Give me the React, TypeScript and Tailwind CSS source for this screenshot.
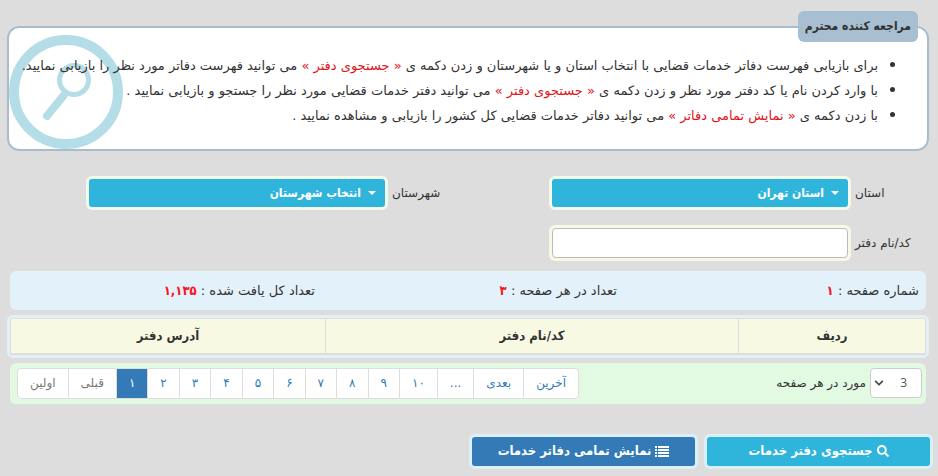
import React from 'react';
import { useState } from "react"
import { FaSearch, FaChevronDown } from "react-icons/fa"

const columns = [
    { title: "ردیف", width: "w-[187px]" },
    { title: "کد/نام دفتر", width: "" },
    { title: "آدرس دفتر", width: "w-[315px]" },
]

const pages = ["۱", "۲", "۳", "۴", "۵", "۶", "۷", "۸", "۹", "۱۰"]

const bold = `font-["DejaVu_Sans_Condensed","DejaVu_Sans",sans-serif] font-bold`

const ListIcon = () => (
    <svg viewBox="0 0 14 11" className="w-[14px] h-[11px] fill-current">
        <path d="M0 0h2v2H0zM3 0h11v2H3zM0 3h2v2H0zM3 3h11v2H3zM0 6h2v2H0zM3 6h11v2H3zM0 9h2v2H0zM3 9h11v2H3z" />
    </svg>
)

const Mark = ({ children }: { children: React.ReactNode }) => (
    <span className="text-[#e0141c]">« {children} »</span>
)

const SelectField = ({ id, label, options }: { id: string, label: string, options: string[] }) => (
    <div className="flex items-center">
        <label htmlFor={id} className="w-20 shrink-0 pl-1 text-left text-xs">{label}</label>
        <div className="relative w-[302px]">
            <select
                id={id}
                className={`block w-full h-[34px] appearance-none rounded-md border-3 border-[#f2fbe9] bg-[#2fb5dc] pr-6 pl-3 text-xs text-white ${bold}`}
            >
                {options.map(option => <option key={option}>{option}</option>)}
            </select>
            <svg viewBox="0 0 8 4" className="pointer-events-none absolute right-3 top-[15px] w-2 h-1 fill-white">
                <path d="M0 0h8L4 4z" />
            </svg>
        </div>
    </div>
)

const Stat = ({ label, value }: { label: string, value: string }) => (
    <p className="px-[7px]">{label} : <b className={`text-[#f81420] ${bold}`}>{value}</b></p>
)

const App = () => {
    const [currentPage, setCurrentPage] = useState("۱")
    const pageItem = "h-full border-r border-[#ddd] px-3"

    return (
        <div dir="rtl" className={`min-h-screen bg-[#dddddd] px-[5px] pt-[11px] text-[#333] font-["DejaVu_Sans",sans-serif]`}>
            {/* Help box */}
            <fieldset className="relative mr-1 ml-0.5 h-[140px] rounded-xl border-2 border-[#a9bccb] bg-white px-[9px]">
                <legend className={`relative z-10 h-[31px] rounded-md bg-[#a7bfd0] px-[7px] text-xs leading-[31px] ${bold}`}>
                    مراجعه کننده محترم
                </legend>
                <svg viewBox="0 0 114 114" className="absolute left-0 bottom-0 size-[114px] fill-none stroke-[#b5dde8]">
                    <circle cx="57" cy="57" r="52" strokeWidth="10" />
                    <circle cx="65" cy="45" r="14.5" strokeWidth="5" />
                    <path d="M55 60L38 81" strokeWidth="8" strokeLinecap="round" />
                    <path d="M58 56l-3 4" strokeWidth="5" />
                </svg>
                <ul className="relative mt-[11px] list-disc pr-10 text-[13px] leading-[25px] whitespace-nowrap marker:text-base">
                    <li>برای بازیابی فهرست دفاتر خدمات قضایی با انتخاب استان و یا شهرستان و زدن دکمه ی <Mark>جستجوی دفتر</Mark> می توانید فهرست دفاتر مورد نظر را بازیابی نمایید.</li>
                    <li>با وارد کردن نام یا کد دفتر مورد نظر و زدن دکمه ی <Mark>جستجوی دفتر</Mark> می توانید دفتر خدمات قضایی مورد نظر را جستجو و بازیابی نمایید .</li>
                    <li>با زدن دکمه ی <Mark>نمایش تمامی دفاتر</Mark> می توانید دفاتر خدمات قضایی کل کشور را بازیابی و مشاهده نمایید .</li>
                </ul>
            </fieldset>

            {/* Filters */}
            <form className="mt-[25px] grid grid-cols-2 gap-y-[15px] pr-0.5">
                <SelectField id="province" label="استان" options={["استان تهران"]} />
                <SelectField id="city" label="شهرستان" options={["انتخاب شهرستان"]} />
                <div className="flex items-center">
                    <label htmlFor="office" className="w-20 shrink-0 pl-1 text-left text-xs whitespace-nowrap">کد/نام دفتر</label>
                    <div className="w-[302px] rounded-md bg-[#f7f9e6] p-[3px]">
                        <input id="office" type="text" className="block w-full h-[30px] rounded border border-[#bbb] bg-white px-2 text-xs" />
                    </div>
                </div>
            </form>

            {/* Summary */}
            <div className="mt-2.5 mr-[7px] ml-[5px] grid h-[39px] grid-cols-3 items-center rounded-md bg-[#e3f2fa] pl-2.5 text-[13px]">
                <Stat label="شماره صفحه" value="۱" />
                <Stat label="تعداد در هر صفحه" value="۳" />
                <Stat label="تعداد کل یافت شده" value="۱,۱۳۵" />
            </div>

            <div className="mt-[5px] mr-1 ml-0.5 rounded-md bg-[#e3f0f8] p-[3px]">
                <table className="w-full table-fixed border-collapse bg-[#f8f9e3] text-[13px]">
                    <thead>
                        <tr>
                            {columns.map(col => (
                                <th key={col.title} className={`${col.width} ${bold} h-[35px] border border-b-2 border-[#ddd]`}>{col.title}</th>
                            ))}
                        </tr>
                    </thead>
                </table>
            </div>

            {/* Pagination */}
            <div className="mt-[5px] mr-[7px] ml-[5px] flex h-[41px] items-center justify-between rounded-md bg-[#e2f9e2] pr-1 pl-[7px]">
                <div className="flex items-center gap-1 text-xs">
                    <div className="relative">
                        <select id="pageSize" defaultValue="3" className={`block h-[30px] w-[52px] appearance-none rounded-sm border border-[#ccc] bg-white pr-3.5 text-[#555] font-["Open_Sans",sans-serif]`}>
                            <option>3</option>
                            <option>5</option>
                            <option>10</option>
                        </select>
                        <FaChevronDown className="pointer-events-none absolute top-2.5 left-1 size-2.5 text-[#444]" />
                    </div>
                    <label htmlFor="pageSize">مورد در هر صفحه</label>
                </div>
                <nav dir="ltr" className="flex h-[31px] overflow-hidden rounded border border-[#ddd] bg-white text-xs text-[#337ab7]">
                    <button className={`${pageItem} text-[#777]`}>اولین</button>
                    <button className={`${pageItem} text-[#777]`}>قبلی</button>
                    {pages.map(page => (
                        <button
                            key={page}
                            onClick={() => setCurrentPage(page)}
                            className={`${pageItem} ${page === currentPage ? "bg-[#337ab7] text-white" : ""}`}
                        >
                            {page}
                        </button>
                    ))}
                    <button className={pageItem}>...</button>
                    <button className={pageItem}>بعدی</button>
                    <button className="h-full px-3">آخرین</button>
                </nav>
            </div>

            {/* Actions */}
            <div className={`mt-[30px] flex gap-1.5 text-[13px] text-white ${bold}`}>
                <button className="flex h-[35px] w-[229px] items-center justify-center gap-1 rounded-md border-3 border-[#daf0fa] bg-[#2fb5dc]">
                    <FaSearch className="size-3" />
                    جستجوی دفتر خدمات
                </button>
                <button className="flex h-[35px] w-[229px] items-center justify-center gap-1 rounded-md border-3 border-[#daf0fa] bg-[#337ab7]">
                    <ListIcon />
                    نمایش تمامی دفاتر خدمات
                </button>
            </div>
        </div>
    )
}

export default App
